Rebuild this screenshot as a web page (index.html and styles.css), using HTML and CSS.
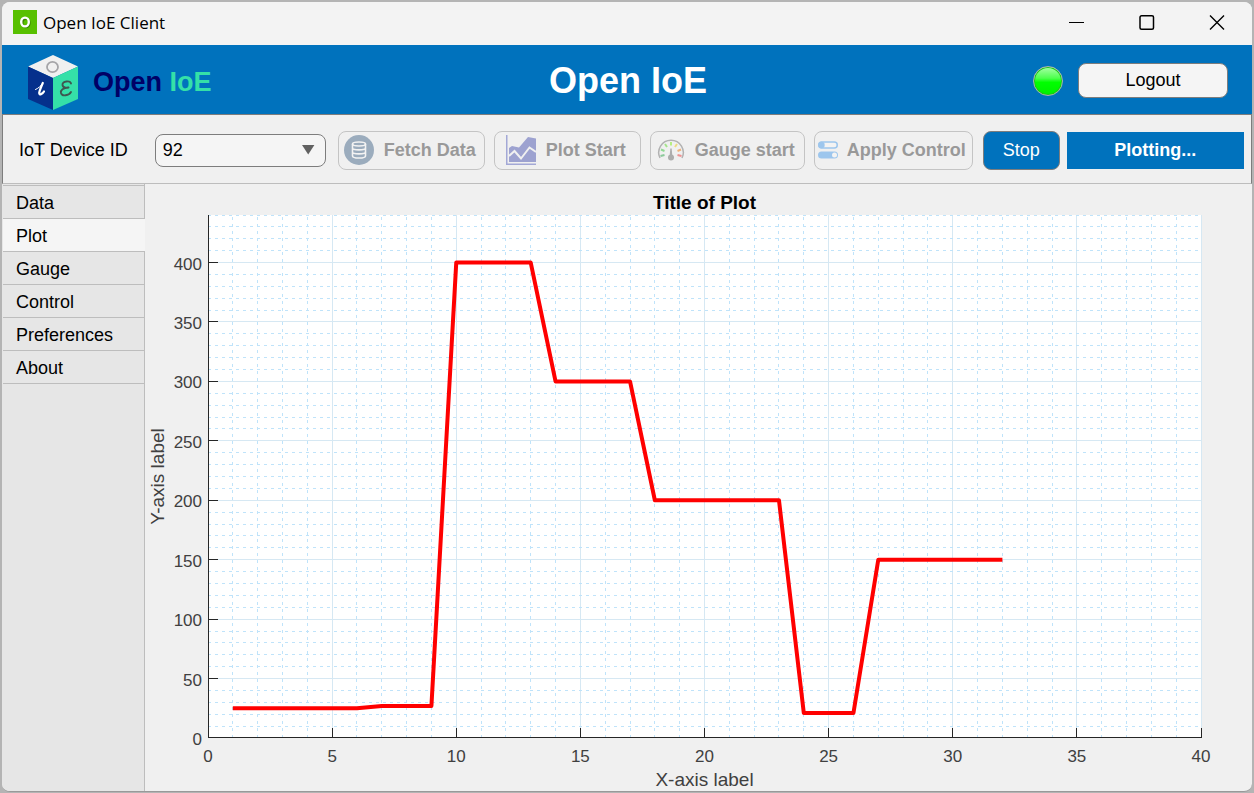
FILE: index.html
```html
<!DOCTYPE html>
<html lang="en">
<head>
  <meta charset="UTF-8">
  <meta name="viewport" content="width=device-width, initial-scale=1.0">
  <title>Open IoE Client</title>
  <link rel="stylesheet" href="styles.css">
</head>
<body>
  <div class="window">
    <div class="titlebar">
      <svg class="app-icon" viewBox="0 0 24 24" aria-hidden="true">
        <rect width="24" height="24" fill="#58c000"/>
        <ellipse cx="13" cy="13" rx="3.6" ry="4.2" fill="none" stroke="#3a8500" stroke-width="2.2"/>
        <ellipse cx="12" cy="12" rx="3.8" ry="4.4" fill="none" stroke="#fff" stroke-width="2.4"/>
      </svg>
      <span class="app-name">Open IoE Client</span>
      <div class="window-buttons">
        <button type="button" aria-label="Minimize"><svg viewBox="0 0 16 16"><path d="M0 8.5H15"/></svg></button>
        <button type="button" aria-label="Maximize"><svg viewBox="0 0 16 16"><rect x="1" y="1.75" width="13.5" height="13.5" rx="1.5" stroke-width="1.5"/></svg></button>
        <button type="button" aria-label="Close"><svg viewBox="0 0 16 16"><path d="M1 1.5L15 15.5M15 1.5L1 15.5" stroke-width="1.4"/></svg></button>
      </div>
    </div>

    <header class="header">
      <div class="brand">
        <svg class="logo" viewBox="0 0 50 56" aria-hidden="true">
          <path d="M25 0L50 11.5L25 23L0 11.5Z" fill="#f0f0f0"/>
          <path d="M0 11.5L25 23V55L0 44Z" fill="#05308c"/>
          <path d="M50 11.5L25 23V55L50 44Z" fill="#35e0a8"/>
          <ellipse cx="24.5" cy="12" rx="5.5" ry="5.2" fill="none" stroke="#a5a5a8" stroke-width="1.8"/>
          <g fill="none" stroke-linecap="round" stroke-linejoin="round">
            <path d="M7.500 34.500C10 33.500 13 31 14.500 28.500" stroke="#fff" stroke-width="1"/>
            <path d="M14.800 28C13.500 31 11.500 35.500 11.200 38C11.200 40.500 14.500 39 16 36.500" stroke="#fff" stroke-width="2.200"/>
            <path d="M43 28.500C42.500 25.500 34 25.500 34.500 30C35 32.500 38 33 40.500 32.500C35 33 32.500 35 33 38C34 42 41 40.500 43 37" stroke="#3f5750" stroke-width="1.9"/>
          </g>
        </svg>
        <span class="brand-name">Open <span class="brand-accent">IoE</span></span>
      </div>
      <h1>Open IoE</h1>
      <div class="session">
        <span class="lamp" role="img" aria-label="Connected"></span>
        <button type="button" class="logout">Logout</button>
      </div>
    </header>

    <div class="toolbar">
      <label for="deviceId">IoT Device ID</label>
      <div class="dropdown">
        <select id="deviceId">
          <option>92</option>
        </select>
      </div>
      <div class="actions">
        <button type="button" class="action fetch" disabled>
          <svg width="30" height="30" viewBox="0 0 30 30" aria-hidden="true">
            <circle cx="15" cy="15" r="15" fill="#9bacbd"/>
            <g fill="none" stroke="#f3f3f3" stroke-width="1.6">
              <ellipse cx="15" cy="9" rx="6.500" ry="2"/>
              <path d="M8.500 9V21C8.500 23.700 21.500 23.700 21.500 21V9M8.500 13C8.500 15.500 21.500 15.500 21.500 13M8.500 17C8.500 19.500 21.500 19.500 21.500 17"/>
            </g>
          </svg>
          Fetch Data
        </button>
        <button type="button" class="action plot" disabled>
          <svg width="30" height="30" viewBox="0 0 30 30" aria-hidden="true">
            <path d="M0.750 0V29.250H30" fill="none" stroke="#a3a8d6" stroke-width="1.500"/>
            <path d="M3 13L6 11L13 12.500L22 2L30 3.500V27H3Z" fill="#9da2d0"/>
            <path d="M3 21L8.500 16L15 23.500L23.500 12.500L30 17" fill="none" stroke="#f0f0f0" stroke-width="2"/>
          </svg>
          Plot Start
        </button>
        <button type="button" class="action gauge" disabled>
          <svg width="28" height="28" viewBox="0 0 28 28" aria-hidden="true">
            <g fill="none">
              <path d="M3 22A12.300 12.300 0 1 1 25 22" stroke="#b2b2b2" stroke-width="1.500"/>
              <path d="M3.500 20L7.500 19" stroke="#8cc99b" stroke-width="2"/>
              <path d="M4 13.500L7.500 15" stroke="#91d993" stroke-width="2"/>
              <path d="M8 8L10 11" stroke="#a4e58c" stroke-width="2"/>
              <path d="M14 6V9.500" stroke="#b7ee82" stroke-width="2"/>
              <path d="M20 8L18 11" stroke="#eddc82" stroke-width="2"/>
              <path d="M24 13.500L20.500 15" stroke="#efb27b" stroke-width="2"/>
              <path d="M24.500 20L20.500 19" stroke="#ee9292" stroke-width="2"/>
            </g>
            <path d="M13.300 12.500H14.700L15.300 19.500H12.700Z" fill="#adadad"/>
            <circle cx="14" cy="21.500" r="3" fill="#adadad"/>
          </svg>
          Gauge start
        </button>
        <button type="button" class="action control" disabled>
          <svg width="20" height="18" viewBox="0 0 20 18" aria-hidden="true">
            <rect x="0.750" y="1" width="18.500" height="6" rx="3" fill="#f3f3f3" stroke="#9dc6ed" stroke-width="1.500"/>
            <circle cx="3.500" cy="4" r="3.200" fill="#9dc6ed"/>
            <rect y="10.500" width="20" height="7" rx="3.500" fill="#9dc6ed"/>
            <circle cx="16.500" cy="14" r="2.500" fill="#f3f3f3"/>
          </svg>
          Apply Control
        </button>
      </div>
      <button type="button" class="stop">Stop</button>
      <div class="status" role="status">Plotting...</div>
    </div>

    <div class="main">
      <div class="tabs" role="tablist" aria-orientation="vertical">
        <button type="button" role="tab">Data</button>
        <button type="button" role="tab" class="active" aria-selected="true">Plot</button>
        <button type="button" role="tab">Gauge</button>
        <button type="button" role="tab">Control</button>
        <button type="button" role="tab">Preferences</button>
        <button type="button" role="tab">About</button>
      </div>
      <div class="panel" role="tabpanel">
        <svg id="plot" class="chart" role="img" aria-label="Title of Plot"></svg>
      </div>
    </div>
  </div>
  <script src="plot.js"></script>
</body>
</html>
```

FILE: styles.css
```css
* { box-sizing: border-box; }
body { margin: 0; min-height: 100vh; display: flex; padding: 2px 2px 1px; background: #b4b4b4; color: #000; font-family: "Liberation Sans", Arial, sans-serif; font-size: 18px; }
button, select { font: inherit; color: inherit; cursor: pointer; }
button:disabled { cursor: default; }

.window { flex: 1; display: flex; flex-direction: column; min-width: 0; background: #f0f0f0; border-radius: 8px; overflow: hidden; border-bottom: 1px solid #999; }

/* title bar */
.titlebar { display: flex; align-items: center; height: 43px; padding: 0 0 3px 11px; background: #f3f3f3; font-family: "Open Sans", "Noto Sans", sans-serif; font-size: 17px; }
.app-icon { width: 24px; height: 24px; margin-right: 6px; }
.window-buttons { display: flex; margin-left: auto; }
.window-buttons button { width: 70px; height: 40px; padding: 0; border: none; background: none; display: flex; align-items: center; justify-content: center; }
.window-buttons svg { width: 16px; height: 16px; fill: none; stroke: #000; }

/* header */
.header { display: grid; grid-template-columns: 1fr auto 1fr; align-items: center; height: 70px; padding: 2px 24px 0 26px; background: #0072bd; border-bottom: 1px solid #7d7d7d; }
.header h1 { margin: 0; color: #fff; font-size: 36px; line-height: 40px; }
.brand { display: flex; align-items: center; gap: 15px; padding-top: 4px; }
.logo { width: 50px; height: 56px; }
.brand-name { color: #000066; font-size: 27px; font-weight: bold; }
.brand-accent { color: #35e0a8; }
.session { display: flex; align-items: center; justify-content: flex-end; gap: 15px; }
.lamp { width: 30px; height: 30px; border-radius: 50%; border: 1px solid #a9b5a9; background: linear-gradient(#a8ffa8, #4dff4d 40%, #00ff00 55%, #00f000); box-shadow: inset 0 0 0 1px #19c419; }
.logout { width: 150px; height: 35px; border: 1px solid #7d7d7d; border-radius: 8px; background: #f5f5f5; }

/* toolbar */
.toolbar { display: flex; align-items: center; height: 69px; padding: 2px 7px 0 16px; border: 1px solid #7d7d7d; border-width: 0 1px; border-bottom: 1px solid #bdbdbd; }
.dropdown { position: relative; width: 171px; margin: 0 12px 0 27px; }
.dropdown::after { content: ""; position: absolute; right: 11px; top: 11px; width: 13px; height: 10px; background: #616161; clip-path: polygon(0 0, 100% 0, 50% 100%); pointer-events: none; }
.dropdown select { width: 100%; height: 33px; padding: 0 7px; border: 1px solid #7d7d7d; border-radius: 8px; background: #f5f5f5; appearance: none; }
.actions { display: flex; gap: 9px; margin-right: 10px; }
.action { display: flex; align-items: center; height: 39px; padding: 0; border: 1px solid #c4c4c4; border-radius: 8px; background: #f0f0f0; color: #999; font-weight: bold; white-space: nowrap; }
.fetch { width: 147px; padding-left: 5px; gap: 10px; }
.plot { width: 147px; padding-left: 11px; gap: 10px; }
.gauge { width: 155px; padding-left: 6px; gap: 10px; }
.control { width: 159px; padding-left: 3px; gap: 9px; }
.stop { width: 77px; height: 39px; margin-right: 7px; padding: 0; border: 1px solid #7d7d7d; border-radius: 8px; background: #0072bd; color: #fff; }
.status { flex: 1; background: #0072bd; color: #fff; font-weight: bold; text-align: center; line-height: 37px; }

/* tabs */
.main { flex: 1; display: flex; }
.tabs { width: 143px; padding: 1px 0 0 1px; display: flex; flex-direction: column; background: #e6e6e6; border-right: 1px solid #bdbdbd; }
.tabs button { height: 33px; padding: 2px 0 0 13px; border: none; border-bottom: 1px solid #bdbdbd; background: #e6e6e6; text-align: left; }
.tabs button:first-child { height: 34px; border-top: 1px solid #bdbdbd; }
.tabs .active { margin-right: -1px; background: #f5f5f5; }

/* plot */
.panel { flex: 1; display: flex; min-width: 0; min-height: 320px; position: relative; }
.chart { position: absolute; inset: 0; width: 100%; height: 100%; }
.chart text { fill: #404040; font-size: 17px; text-anchor: middle; }
.chart .y-tick { text-anchor: end; }
.chart .label { font-size: 19px; }
.chart .title { fill: #000; font-size: 19px; font-weight: bold; }
.area { fill: #fff; }
.grid { stroke: #d6e8f3; }
.minor { stroke: #bfe3fa; stroke-dasharray: 3 4; }
.axis { stroke: #262626; }
.series { fill: none; stroke: #f00; stroke-width: 4; stroke-linejoin: round; }
```

FILE: plot.js
```js
const plot = document.getElementById('plot');
const margin = { left: 63, right: 51, top: 31, bottom: 53 };
const xMax = 40;
const yMax = 440;
const readings = [
  25, 25, 25, 25, 25, 25, 27, 27, 27, 400, 400, 400, 400, 300, 300, 300, 300,
  200, 200, 200, 200, 200, 200, 21, 21, 21, 150, 150, 150, 150, 150, 150
];

function line(cls, x1, y1, x2, y2) {
  return `<line class="${cls}" x1="${x1}" y1="${y1}" x2="${x2}" y2="${y2}"/>`;
}

function text(cls, x, y, value) {
  return `<text class="${cls}" x="${x}" y="${y}">${value}</text>`;
}

function drawPlot() {
  const { width, height } = plot.getBoundingClientRect();
  const left = margin.left;
  const right = width - margin.right;
  const top = margin.top;
  const bottom = height - margin.bottom;
  const px = v => left + v / xMax * (right - left);
  const py = v => bottom - v / yMax * (bottom - top);
  const snap = v => Math.floor(v) + 0.5;
  const middle = (left + right) / 2;
  let out = `<rect class="area" x="${left}" y="${top}" width="${right - left}" height="${bottom - top}"/>`;
  let ticks = '';

  for (let x = 1; x <= xMax; x++) {
    out += line(x % 5 ? 'minor' : 'grid', snap(px(x)), bottom, snap(px(x)), top);
  }
  for (let y = 10; y <= yMax; y += 10) {
    out += line(y % 50 ? 'minor' : 'grid', left, snap(py(y)), right, snap(py(y)));
  }
  for (let x = 0; x <= xMax; x += 5) {
    ticks += line('axis', snap(px(x)), bottom, snap(px(x)), bottom - 10);
    ticks += text('x-tick', px(x), bottom + 24, x);
  }
  for (let y = 50; y <= yMax; y += 50) {
    ticks += line('axis', left, snap(py(y)), left + 10, snap(py(y)));
  }
  for (let y = 0; y <= yMax; y += 50) {
    ticks += text('y-tick', left - 6, py(y) + 7, y);
  }
  out += line('axis', left + 0.5, top, left + 0.5, bottom);
  out += line('axis', left, snap(bottom) - 1, right + 1, snap(bottom) - 1);
  out += ticks;

  const points = readings.map((v, i) => `${px(i + 1)},${py(v)}`).join(' ');
  out += `<polyline class="series" points="${points}"/>`;
  out += text('title', middle, 25, 'Title of Plot');
  out += text('label', middle, bottom + 48, 'X-axis label');
  out += `<text class="label" transform="translate(19 ${(top + bottom) / 2}) rotate(-90)">Y-axis label</text>`;
  plot.innerHTML = out;
}

window.addEventListener('resize', drawPlot);
drawPlot();
```
